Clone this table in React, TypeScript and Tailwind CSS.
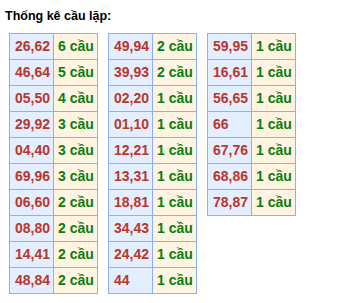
const cols: [string, string][][] = [
  [
    ["26,62", "6 cầu"],
    ["46,64", "5 cầu"],
    ["05,50", "4 cầu"],
    ["29,92", "3 cầu"],
    ["04,40", "3 cầu"],
    ["69,96", "3 cầu"],
    ["06,60", "2 cầu"],
    ["08,80", "2 cầu"],
    ["14,41", "2 cầu"],
    ["48,84", "2 cầu"],
  ],
  [
    ["49,94", "2 cầu"],
    ["39,93", "2 cầu"],
    ["02,20", "1 cầu"],
    ["01,10", "1 cầu"],
    ["12,21", "1 cầu"],
    ["13,31", "1 cầu"],
    ["18,81", "1 cầu"],
    ["34,43", "1 cầu"],
    ["24,42", "1 cầu"],
    ["44", "1 cầu"],
  ],
  [
    ["59,95", "1 cầu"],
    ["16,61", "1 cầu"],
    ["56,65", "1 cầu"],
    ["66", "1 cầu"],
    ["67,76", "1 cầu"],
    ["68,86", "1 cầu"],
    ["78,87", "1 cầu"],
  ],
];

export default function App() {
  return (
    <div className="w-[362px] h-[303px] bg-white font-['Liberation_Sans',Arial,sans-serif]">
      <div className="pl-[5px] pt-[8px] text-[12.5px] font-bold text-black leading-[16px]">
        Thống kê cầu lặp:
      </div>
      <div className="flex items-start gap-[10px] pl-[9px] pt-[9px]">
        {cols.map((rows, i) => (
          <table key={i} className="border-collapse border border-[#8cb0f2]">
            <tbody>
              {rows.map(([pair, count]) => (
                <tr key={pair} className="h-[26px]">
                  <td className="w-[44px] border border-[#8cb0f2] bg-[#e3eeff] pl-[5px] text-[14px] font-bold text-[#b8382b]">
                    {pair}
                  </td>
                  <td className="w-[44px] border border-[#8cb0f2] bg-[#fff4e1] pl-[4px] text-[14px] font-bold text-[#0a7d12] whitespace-nowrap">
                    {count}
                  </td>
                </tr>
              ))}
            </tbody>
          </table>
        ))}
      </div>
    </div>
  );
}
